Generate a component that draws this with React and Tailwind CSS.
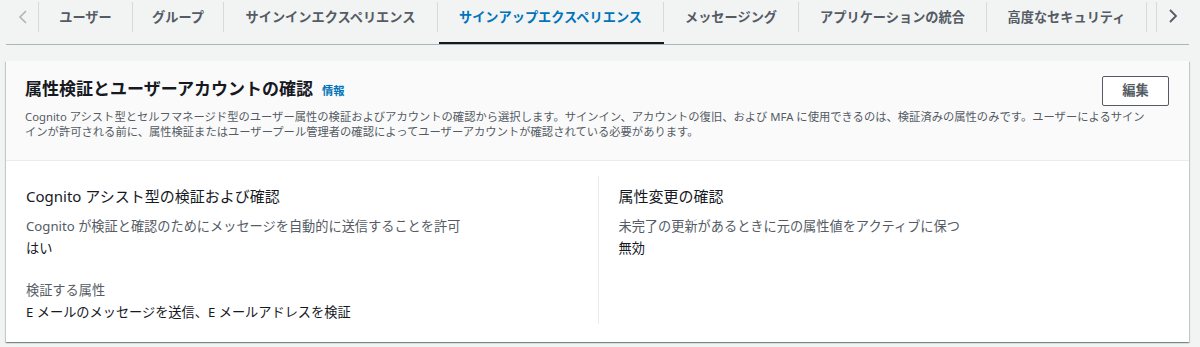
import React from "react";

const tabs = [
  { label: "ユーザー", w: "w-[94px]" },
  { label: "グループ", w: "w-[91px]" },
  { label: "サインインエクスペリエンス", w: "w-[214px]" },
  { label: "サインアップエクスペリエンス", w: "w-[226px]", active: true },
  { label: "メッセージング", w: "w-[135px]" },
  { label: "アプリケーションの統合", w: "w-[188px]" },
  { label: "高度なセキュリティ", w: "w-[160px]" },
  { label: "", w: "w-[120px]" },
];

export default function App() {
  return (
    <div
      className="w-[1200px] h-[347px] bg-[#f2f3f3] pl-[6px] pr-[11px] overflow-hidden text-[#16191f]"
      style={{ fontFamily: '"Noto Sans", "Noto Sans CJK JP", sans-serif' }}
    >
      {/* Tab bar */}
      <div className="flex h-[45px] border-b border-[#aab7b8]">
        <div className="w-[33px] shrink-0 h-[44px] pt-[2px]">
          <div className="h-[30px] flex items-center justify-center border-r border-[#d5dbdb]">
            <svg width="12" height="16" viewBox="0 0 12 16" className="ml-[1px]">
              <polyline points="9,2 3,8 9,14" fill="none" stroke="#aab7b8" strokeWidth="1.6" />
            </svg>
          </div>
        </div>
        <div className="flex flex-1 overflow-hidden">
          {tabs.map((t, i) => (
            <div key={i} className={`relative shrink-0 h-[44px] pt-[2px] ${t.w}`}>
              <div
                className={`h-[30px] pt-[1px] flex items-center justify-center ${i < tabs.length - 1 ? "border-r border-[#d5dbdb]" : ""} text-[13.2px] font-bold whitespace-nowrap ${t.active ? "text-[#0073bb]" : "text-[#545b64]"}`}
              >
                {t.label}
              </div>
              {t.active && (
                <div className="absolute left-[1px] right-0 bottom-[-1px] h-[3px] bg-[#16191f]" />
              )}
            </div>
          ))}
        </div>
        <div className="w-[33px] shrink-0 h-[44px] pt-[2px]">
          <div className="h-[30px] flex items-center justify-center border-l border-[#d5dbdb]">
            <svg width="12" height="16" viewBox="0 0 12 16" className="mr-[1px] -mt-[2px]">
              <polyline points="3,2 9,8 3,14" fill="none" stroke="#545b64" strokeWidth="1.8" />
            </svg>
          </div>
        </div>
      </div>

      {/* Card */}
      <div className="mt-[16px] bg-white shadow-[0_1px_1px_0_rgba(0,28,36,0.3),1px_1px_1px_0_rgba(0,28,36,0.15),-1px_1px_1px_0_rgba(0,28,36,0.15)]">
        <div className="bg-[#fafafa] border-b border-[#eaeded] pt-[15px] pb-[21px] pl-[19px] pr-[20px]">
          <div className="flex items-start justify-between h-[30px]">
            <div className="flex items-baseline pt-[2px]">
              <span className="text-[17px] leading-[22px] font-bold text-[#16191f]">
                属性検証とユーザーアカウントの確認
              </span>
              <span className="ml-[9px] text-[11.3px] font-bold text-[#0073bb]">情報</span>
            </div>
            <button className="w-[67px] h-[30px] border border-[#545b64] rounded-[2px] bg-white text-[13.2px] font-bold text-[#545b64] flex items-center justify-center">
              編集
            </button>
          </div>
          <div className="mt-[3px] text-[11.3px] leading-[15px] text-[#545b64]">
            <div className="whitespace-nowrap">
              Cognito アシスト型とセルフマネージド型のユーザー属性の検証およびアカウントの確認から選択します。サインイン、アカウントの復旧、および MFA に使用できるのは、検証済みの属性のみです。ユーザーによるサイン
            </div>
            <div className="whitespace-nowrap">
              インが許可される前に、属性検証またはユーザープール管理者の確認によってユーザーアカウントが確認されている必要があります。
            </div>
          </div>
        </div>

        <div className="grid grid-cols-2 px-[20px] pt-[15px] pb-[18px]">
          <div className="pt-[9px] pr-[20px]">
            <div className="text-[15px] leading-[22px] text-[#16191f]">
              Cognito アシスト型の検証および確認
            </div>
            <div className="mt-[8px] text-[13.2px] leading-[22px] text-[#545b64]">
              Cognito が検証と確認のためにメッセージを自動的に送信することを許可
            </div>
            <div className="text-[13.2px] leading-[22px] text-[#16191f]">はい</div>
            <div className="mt-[20px] text-[13.2px] leading-[22px] text-[#545b64]">検証する属性</div>
            <div className="text-[13.2px] leading-[23px] text-[#16191f]">
              E メールのメッセージを送信、E メールアドレスを検証
            </div>
          </div>
          <div className="pt-[9px] pl-[20px] border-l border-[#eaeded]">
            <div className="text-[15px] leading-[22px] text-[#16191f]">属性変更の確認</div>
            <div className="mt-[8px] text-[13.2px] leading-[22px] text-[#545b64]">
              未完了の更新があるときに元の属性値をアクティブに保つ
            </div>
            <div className="text-[13.2px] leading-[22px] text-[#16191f]">無効</div>
          </div>
        </div>
      </div>
    </div>
  );
}
